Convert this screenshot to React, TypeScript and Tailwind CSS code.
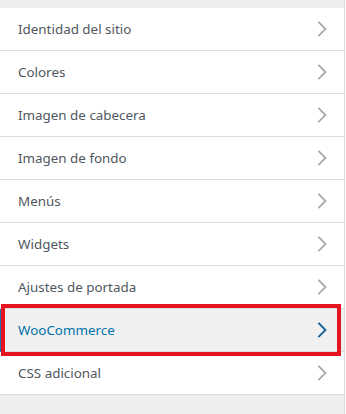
const items = [
    "Identidad del sitio",
    "Colores",
    "Imagen de cabecera",
    "Imagen de fondo",
    "Menús",
    "Widgets",
    "Ajustes de portada",
    "WooCommerce",
    "CSS adicional",
];

function Chevron({ active }: { active: boolean }) {
    return (
        <svg width="10" height="16" viewBox="0 0 10 16" fill="none" className="shrink-0">
            <path
                d="M2 1.5 L8.5 8 L2 14.5"
                stroke={active ? "#135e96" : "#a7aaad"}
                strokeWidth="1.8"
                strokeLinecap="square"
            />
        </svg>
    );
}

function MenuRow({ label }: { label: string }) {
    const active = label == "WooCommerce";
    return (
        <li
            className={[
                "flex h-[43px] items-center justify-between border-b border-[#dcdcde] pr-[17px]",
                active
                    ? "border-l-4 border-l-[#2271b1] bg-[#f0f0f1] pl-[14px] text-[#0073aa]"
                    : "bg-white pl-[18px] text-[#50575e]",
            ].join(" ")}
        >
            <span className="pt-[2px] text-[13.4px] leading-none">{label}</span>
            <Chevron active={active} />
        </li>
    );
}

export default function App() {
    return (
        <div
            className="relative flex h-[414px] w-[346px] bg-[#eeeeee]"
            style={{ fontFamily: '"Noto Sans", "Open Sans", sans-serif' }}
        >
            <div className="w-[344px] pt-[8px]">
                <ul>
                    {items.map((item) => (
                        <MenuRow key={item} label={item} />
                    ))}
                </ul>
            </div>
            <div className="w-px bg-[#dcdcde]" />
            <div className="w-px bg-white" />

            {/* highlight box drawn over the WooCommerce row */}
            <div className="pointer-events-none absolute left-[1px] top-[304px] h-[52px] w-[340px] border-4 border-[#e5141f]" />
        </div>
    );
}
